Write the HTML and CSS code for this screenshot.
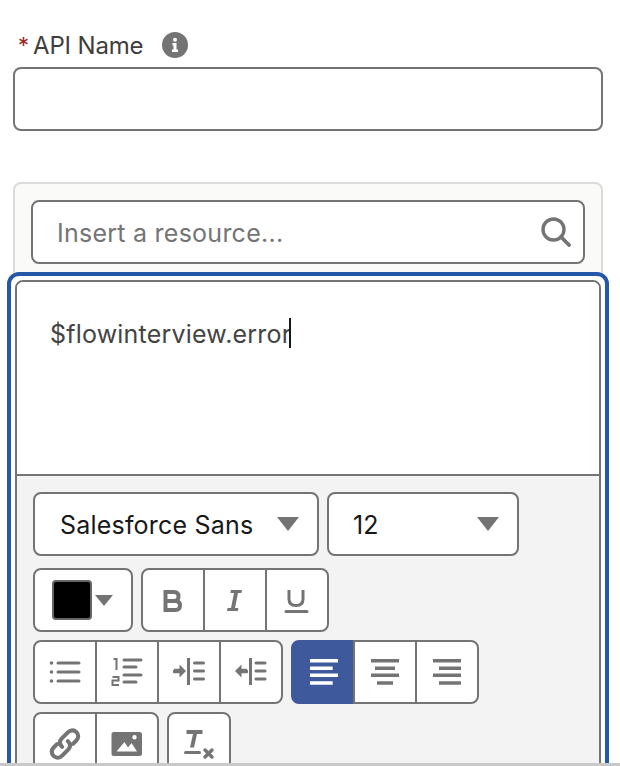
FILE: index.html
```html
<!DOCTYPE html>
<html lang="en">
<head>
<meta charset="utf-8">
<title>API Name</title>
<link rel="stylesheet" href="styles.css">
</head>
<body>
<main class="page">
  <div class="field">
    <div class="label-row">
      <span class="req">*</span><span class="label">API Name</span>
      <svg class="info" viewBox="0 0 26 26"><circle cx="13" cy="13" r="13" fill="#747474"/><circle cx="13" cy="7.800" r="2" fill="#fff"/><path d="M10.500 11h4v6.500h1.500V20h-6v-2.500h1.500v-4h-1z" fill="#fff"/></svg>
    </div>
    <div class="input"></div>
  </div>
  <section class="card">
    <div class="search">
      <span class="placeholder">Insert a resource...</span>
      <svg class="search-icon" viewBox="0 0 30 30"><circle cx="12.500" cy="12.500" r="10.500" fill="none" stroke="#747474" stroke-width="3.400"/><path d="M20 20l8 8" stroke="#747474" stroke-width="3.800" stroke-linecap="round"/></svg>
    </div>
    <div class="focus">
      <div class="editor">
        <div class="content"><span class="text">$flowinterview.error</span><span class="caret"></span></div>
        <div class="toolbar">
          <div class="row row-select">
            <div class="select select-font"><span class="select-text">Salesforce Sans</span><i class="tri"></i></div>
            <div class="select select-size"><span class="select-text">12</span><i class="tri"></i></div>
          </div>
          <div class="row row-first">
            <div class="group"><div class="btn btn-color"><b class="swatch"></b><i class="tri tri-small"></i></div></div>
            <div class="group">
              <div class="btn"><svg class="ico" viewBox="0 0 32 32"><path fill="none" stroke="#747474" stroke-width="4" d="M8.500 8h8.500c3 0 4.500 1.400 4.500 4.500s-1.500 4.500-4.500 4.500H8.500zM8.500 17h10c3 0 4.500 1.500 4.500 4.500s-1.500 4.500-4.500 4.500h-10z"/></svg></div>
              <div class="btn"><svg class="ico" viewBox="0 0 32 32"><path fill="#747474" d="M12 6h11l-.6 3H19l-3 15h3.400l-.6 3H8l.6-3H12l3-15h-3.600z"/></svg></div>
              <div class="btn"><svg class="ico" viewBox="0 0 32 32"><path fill="none" stroke="#747474" stroke-width="3" d="M8 6v9c0 4.500 2.700 6.500 7 6.500s7-2 7-6.500V6"/><path d="M5 27.500h21" stroke="#747474" stroke-width="3" stroke-linecap="round"/></svg></div>
            </div>
          </div>
          <div class="row">
            <div class="group">
              <div class="btn"><svg class="ico" viewBox="0 0 32 32"><path stroke="#747474" stroke-width="3" stroke-linecap="round" d="M9 7h21M9 16h21M9 25h21"/><circle cx="2.500" cy="7" r="1.800" fill="#747474"/><circle cx="2.500" cy="16" r="1.800" fill="#747474"/><circle cx="2.500" cy="25" r="1.800" fill="#747474"/></svg></div>
              <div class="btn"><svg class="ico" viewBox="0 0 32 32"><path stroke="#747474" stroke-width="3" stroke-linecap="round" d="M13 4h17M13 11h12M13 19h17M13 26h12"/><path fill="none" stroke="#747474" stroke-width="2" d="M2.500 3h3v11M1.500 21h6v3.500h-6V29h6.500"/></svg></div>
              <div class="btn"><svg class="ico" viewBox="0 0 32 32"><path stroke="#747474" stroke-width="3" d="M15.500 2v27"/><path stroke="#747474" stroke-width="3" stroke-linecap="round" d="M21.500 7h9M21.500 15h9M21.500 23h9"/><path fill="#747474" d="M1 12.800h5.500V8.500l6.500 6.500-6.500 6.500v-4.200H1a1 1 0 0 1-1-1v-1.800a1 1 0 0 1 1-.7z"/></svg></div>
              <div class="btn"><svg class="ico" viewBox="0 0 32 32"><path stroke="#747474" stroke-width="3" d="M15.500 2v27"/><path stroke="#747474" stroke-width="3" stroke-linecap="round" d="M21 7h9M21 15h9M21 23h9"/><path fill="#747474" d="M12 12.800H6.500V8.500L0 15l6.500 6.500v-4.200H12a1 1 0 0 0 1-1v-1.800a1 1 0 0 0-1-.7z"/></svg></div>
            </div>
            <div class="group">
              <div class="btn btn-on"><svg class="ico" viewBox="0 0 32 32"><path stroke="#fff" stroke-width="3.400" d="M3 4.700h28M3 12.300h22.700M3 19.300h28M3 27h22.700"/></svg></div>
              <div class="btn"><svg class="ico" viewBox="0 0 32 32"><path stroke="#747474" stroke-width="3.400" d="M2 4.700h28M6 12.300h20M2 19.300h28M8 27h16"/></svg></div>
              <div class="btn"><svg class="ico" viewBox="0 0 32 32"><path stroke="#747474" stroke-width="3.400" d="M2 4.700h28M8 12.300h22M2 19.300h28M8 27h22"/></svg></div>
            </div>
          </div>
          <div class="row">
            <div class="group">
              <div class="btn"><svg class="ico" viewBox="2 2 28 28"><path fill="none" stroke="#747474" stroke-width="3.600" stroke-linecap="round" d="M13.500 18.500c-2.500-2.500-2.500-5.200-.5-7.200l5.500-5.500c2.300-2.300 5.400-2.300 7.500-.2s2.100 5.200-.1 7.400l-2.900 2.900M18.500 13.500c2.500 2.500 2.500 5.200.5 7.200l-5.500 5.500c-2.300 2.300-5.400 2.300-7.500.2s-2.100-5.200.1-7.400l2.900-2.900"/></svg></div>
              <div class="btn"><svg class="ico" viewBox="0 0 32 32"><path fill="#747474" fill-rule="evenodd" d="M3 4h25.500A2.500 2.500 0 0 1 31 6.500v19a2.500 2.500 0 0 1-2.500 2.500H3a2.500 2.500 0 0 1-2.500-2.500v-19A2.500 2.500 0 0 1 3 4zM23.500 7a2.200 2.200 0 1 0 0 4.400 2.200 2.200 0 0 0 0-4.400zM5.500 23.500h20.500L20.500 15l-3.500 4.500-3.500-5.500z"/></svg></div>
            </div>
            <div class="group">
              <div class="btn btn-clear"><svg class="ico" viewBox="0 0 32 32"><path fill="#747474" d="M3.500 2h16v4H14l-3 13.500H7L10 6H3.500z"/><path stroke="#747474" stroke-width="3" stroke-linecap="round" d="M2.500 24.500h14"/><path stroke="#747474" stroke-width="3.400" stroke-linecap="round" d="M22 22l7 7M29 22l-7 7"/></svg></div>
            </div>
          </div>
        </div>
      </div>
    </div>
  </section>
</main>
<div class="edge"></div>
</body>
</html>
```
FILE: styles.css
```css
* { box-sizing: border-box; }
html, body { margin: 0; height: 100%; }
body {
  display: flex;
  flex-direction: column;
  height: 766px;
  overflow: hidden;
  background: #fff;
  font-family: Inter, "Liberation Sans", sans-serif;
  color: #181818;
}
.page { flex: 1; min-height: 0; overflow: hidden; padding: 28px 17px 0 13px; }
.edge { height: 3px; flex: none; background: #c9c9c9; }
.label-row { display: flex; align-items: center; height: 36px; padding-left: 5px; margin-bottom: 4px; margin-top: -1px; }
.req { color: #a32222; font-size: 22px; width: 15px; line-height: 1; }
.label { font-size: 24px; color: #3e3e3c; letter-spacing: -0.15px; }
.info { width: 26px; height: 26px; margin-left: 19px; }
.input { height: 64px; border: 2px solid #747474; border-radius: 8px; background: #fff; }
.card {
  margin-top: 51px;
  height: 700px;
  border: 2px solid #dddbda;
  border-radius: 8px;
  background: #fafaf9;
  padding: 16px 16px 0;
}
.search {
  display: flex;
  align-items: center;
  justify-content: space-between;
  height: 64px;
  border: 2px solid #747474;
  border-radius: 8px;
  background: #fff;
  padding: 0 12px 0 24px;
}
.placeholder { font-size: 25px; letter-spacing: 0.25px; color: #747474; padding-top: 2px; }
.search-icon { width: 30px; height: 30px; }
.focus {
  margin: 8px -24px 0;
  border: 4px solid #2558a6;
  border-radius: 12px;
  padding: 4px;
  background: #fff;
}
.editor { border: 2px solid #747474; border-radius: 8px; overflow: hidden; }
.content { height: 192px; padding: 34px 33px 0; background: #fff; font-size: 25px; letter-spacing: 0.2px; display: flex; align-items: flex-start; color: #444; line-height: 36px; }
.caret { display: block; flex: none; width: 2px; height: 30px; margin: 2px 0 0 -2px; background: #181818; }
.toolbar { border-top: 2px solid #747474; background: #f3f3f3; padding: 16px 16px 60px; }
.row { display: flex; gap: 8px; margin-top: 8px; }
.row-select { margin-top: 0; }
.row-first { margin-top: 12px; }
.select {
  display: flex;
  align-items: center;
  justify-content: space-between;
  height: 64px;
  border: 2px solid #747474;
  border-radius: 8px;
  background: #fff;
  font-size: 25px;
  letter-spacing: 0.2px;
  color: #181818;
  padding: 0 18px 0 25px;
}
.select-text { padding-top: 2px; }
.select-font { width: 286px; }
.select-size { width: 192px; padding-left: 24px; }
.tri { display: block; width: 0; height: 0; border-left: 11px solid transparent; border-right: 11px solid transparent; border-top: 14px solid #747474; }
.tri-small { border-left-width: 9px; border-right-width: 9px; border-top-width: 11px; }
.group { display: flex; height: 64px; }
.btn {
  width: 64px;
  margin-left: -2px;
  display: flex;
  align-items: center;
  justify-content: center;
  border: 2px solid #747474;
  background: #fff;
}
.btn:first-child { margin-left: 0; border-radius: 8px 0 0 8px; }
.btn:last-child { border-radius: 0 8px 8px 0; }
.btn:only-child { border-radius: 8px; }
.btn-on { background: #3f5a9c; border-color: #3f5a9c; }
.btn.btn-color { width: 100px; justify-content: flex-start; padding-left: 17px; gap: 3px; }
.swatch { display: block; width: 40px; height: 40px; background: #000; border: 2px solid #666; border-radius: 4px; }
.ico { width: 32px; height: 32px; flex: none; overflow: visible; }
```
